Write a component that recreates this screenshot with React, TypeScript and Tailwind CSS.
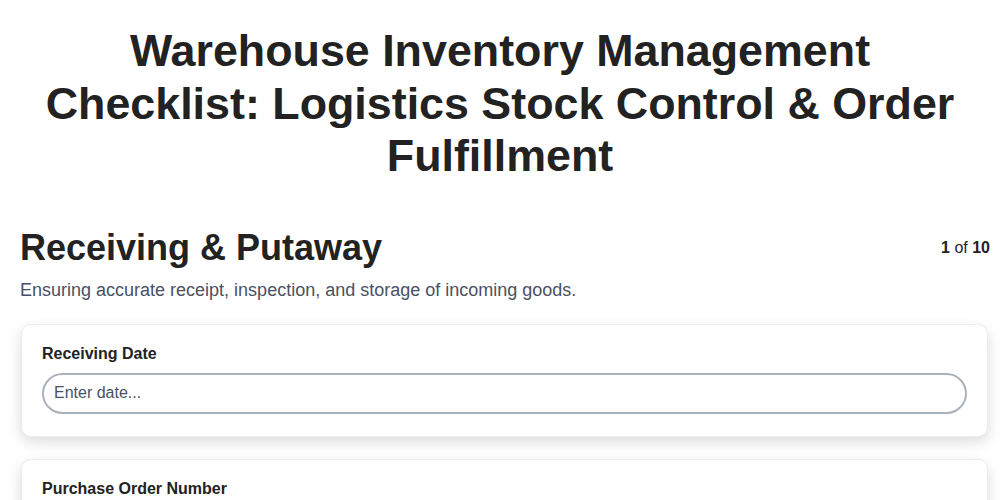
export default function App() {
    const fields = [
        { label: 'Receiving Date', placeholder: 'Enter date...' },
        { label: 'Purchase Order Number', placeholder: 'Enter PO number...' },
    ];

    return (
        <div className="min-h-screen bg-white text-[#222] font-['Liberation_Sans',Arial,sans-serif]">
            <div className="max-w-[1000px] mx-auto pt-[24px] pb-10">
                <h1 className="text-[44.8px] leading-[52.5px] font-bold text-center px-5">
                    Warehouse Inventory Management Checklist: Logistics Stock Control &amp; Order Fulfillment
                </h1>

                <div className="pl-5 pr-[10px]">
                    <div className="mt-[44px] flex items-start justify-between">
                        <h2 className="text-[36px] leading-[44px] font-bold">Receiving &amp; Putaway</h2>
                        <div className="text-[16px] mt-[10px]">
                            <span className="font-bold">1</span> of <span className="font-bold">10</span>
                        </div>
                    </div>
                    <p className="mt-[7px] text-[18px] text-[#4a5063]">
                        Ensuring accurate receipt, inspection, and storage of incoming goods.
                    </p>

                    <div className="mt-[20px] flex flex-col gap-[22px] pl-px pr-[2px]">
                        {fields.map((f) => (
                            <div
                                key={f.label}
                                className="bg-white border border-[#ececf0] rounded-[10px] px-5 pt-[17px] pb-[22px] shadow-[0_5px_14px_rgba(0,0,0,0.14)]"
                            >
                                <label className="block text-[16px] font-bold mb-[7px]">{f.label}</label>
                                <input
                                    type="text"
                                    placeholder={f.placeholder}
                                    className="w-full h-[41px] rounded-full border-2 border-[#a9b1ba] px-[10px] text-[16px] placeholder:text-[#4b5263] outline-none"
                                />
                            </div>
                        ))}
                    </div>
                </div>
            </div>
        </div>
    );
}
